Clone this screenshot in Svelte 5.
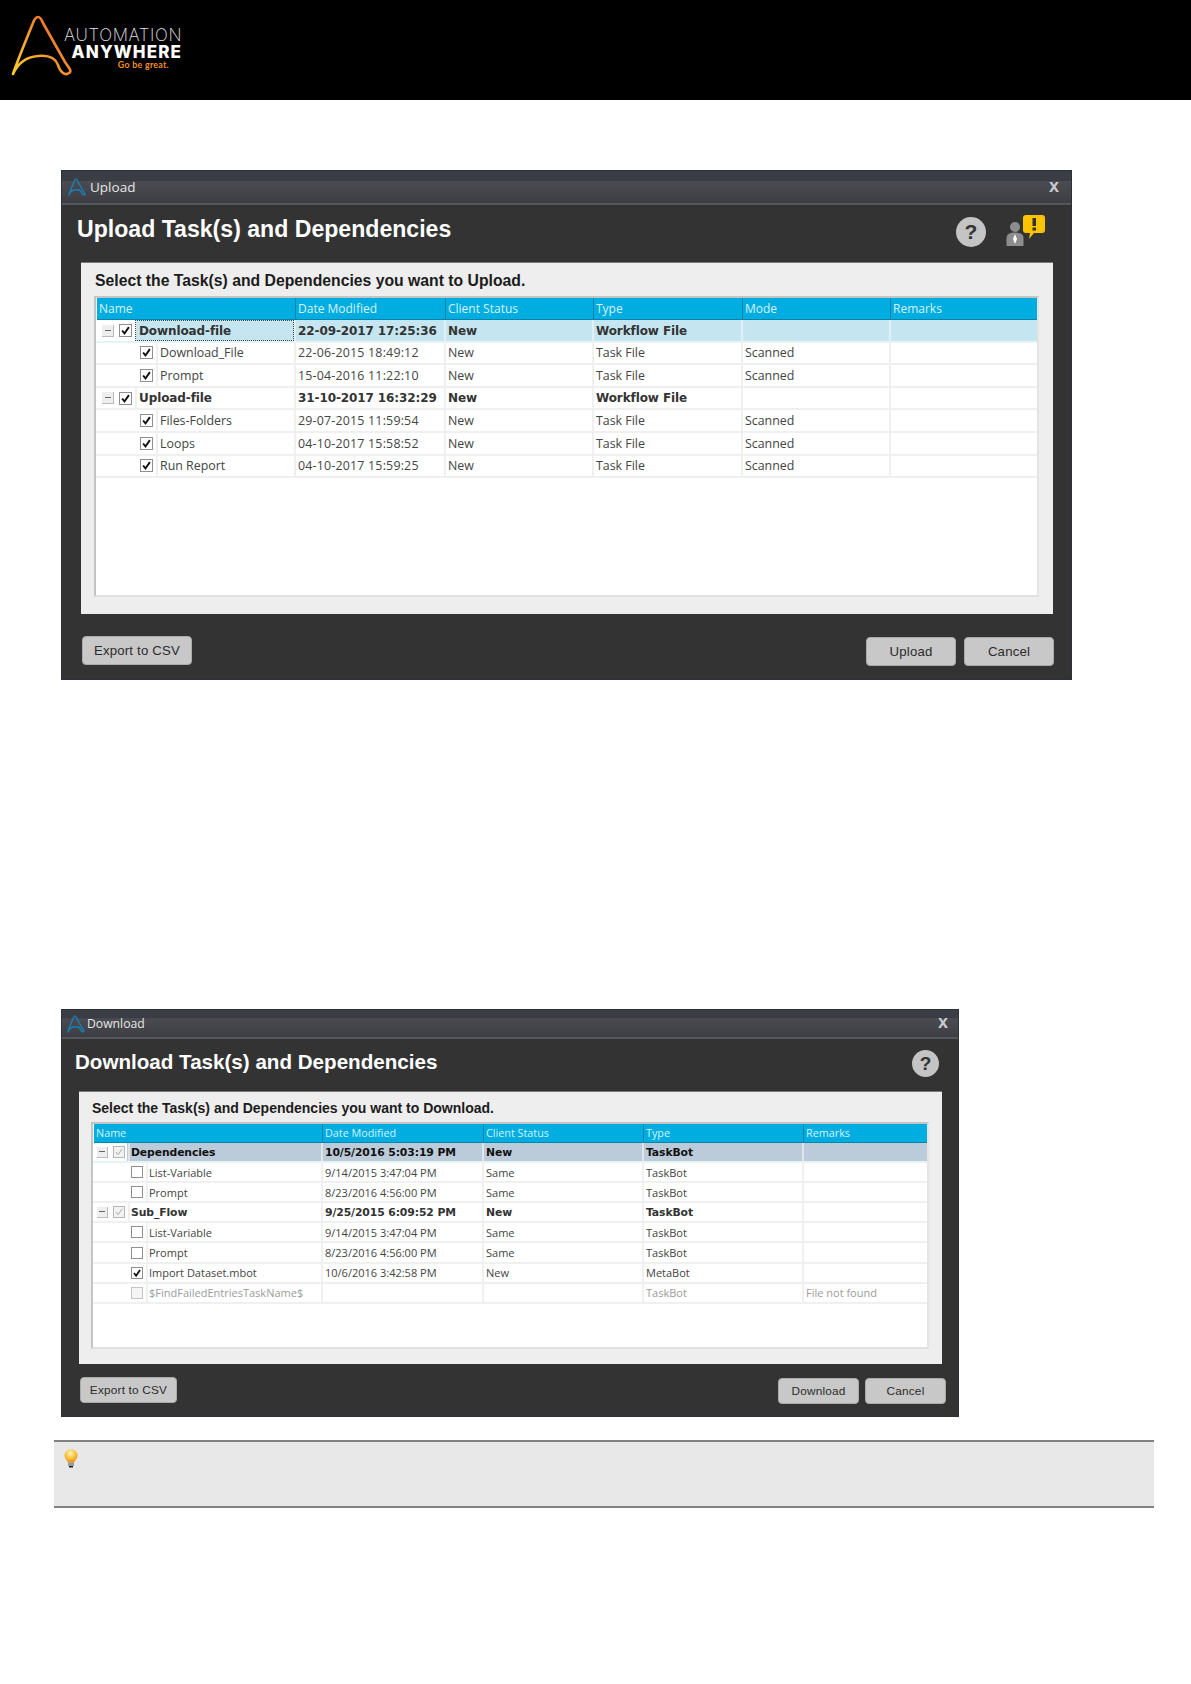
<script>
  const uploadRows = [
    { name: 'Download-file', date: '22-09-2017 17:25:36', status: 'New', type: 'Workflow File', mode: '', remarks: '', group: true, selected: true, checked: true },
    { name: 'Download_File', date: '22-06-2015 18:49:12', status: 'New', type: 'Task File', mode: 'Scanned', remarks: '', checked: true },
    { name: 'Prompt', date: '15-04-2016 11:22:10', status: 'New', type: 'Task File', mode: 'Scanned', remarks: '', checked: true },
    { name: 'Upload-file', date: '31-10-2017 16:32:29', status: 'New', type: 'Workflow File', mode: '', remarks: '', group: true, checked: true },
    { name: 'Files-Folders', date: '29-07-2015 11:59:54', status: 'New', type: 'Task File', mode: 'Scanned', remarks: '', checked: true },
    { name: 'Loops', date: '04-10-2017 15:58:52', status: 'New', type: 'Task File', mode: 'Scanned', remarks: '', checked: true },
    { name: 'Run Report', date: '04-10-2017 15:59:25', status: 'New', type: 'Task File', mode: 'Scanned', remarks: '', checked: true }
  ];

  const downloadRows = [
    { name: 'Dependencies', date: '10/5/2016 5:03:19 PM', status: 'New', type: 'TaskBot', remarks: '', group: true, selected: true, checked: true, muted: true },
    { name: 'List-Variable', date: '9/14/2015 3:47:04 PM', status: 'Same', type: 'TaskBot', remarks: '' },
    { name: 'Prompt', date: '8/23/2016 4:56:00 PM', status: 'Same', type: 'TaskBot', remarks: '' },
    { name: 'Sub_Flow', date: '9/25/2015 6:09:52 PM', status: 'New', type: 'TaskBot', remarks: '', group: true, checked: true, muted: true },
    { name: 'List-Variable', date: '9/14/2015 3:47:04 PM', status: 'Same', type: 'TaskBot', remarks: '' },
    { name: 'Prompt', date: '8/23/2016 4:56:00 PM', status: 'Same', type: 'TaskBot', remarks: '' },
    { name: 'Import Dataset.mbot', date: '10/6/2016 3:42:58 PM', status: 'New', type: 'MetaBot', remarks: '', checked: true },
    { name: '$FindFailedEntriesTaskName$', date: '', status: '', type: 'TaskBot', remarks: 'File not found', missing: true }
  ];

  const dialogs = [
    {
      kind: 'upload', win: 'Upload', title: 'Upload Task(s) and Dependencies',
      prompt: 'Select the Task(s) and Dependencies you want to Upload.', action: 'Upload',
      columns: ['Name', 'Date Modified', 'Client Status', 'Type', 'Mode', 'Remarks'],
      keys: ['date', 'status', 'type', 'mode', 'remarks'], rows: uploadRows, alert: true
    },
    {
      kind: 'download', win: 'Download', title: 'Download Task(s) and Dependencies',
      prompt: 'Select the Task(s) and Dependencies you want to Download.', action: 'Download',
      columns: ['Name', 'Date Modified', 'Client Status', 'Type', 'Remarks'],
      keys: ['date', 'status', 'type', 'remarks'], rows: downloadRows, alert: false
    }
  ];

  const logoPath = 'M13 74C17 62 26 40 33 23C36 15 40 15 43 23L65 62C70 69 72 71 69 73C65 76 60 72 58 65C55 57 47 55 38 56C26 57 18 63 13 74Z';
</script>

<header class="brand">
  <svg class="brand-mark" width="80" height="84" viewBox="0 0 80 84" fill="none">
    <defs>
      <linearGradient id="aGrad" x1="10" y1="74" x2="70" y2="30" gradientUnits="userSpaceOnUse">
        <stop offset="0" stop-color="#fdd22e" />
        <stop offset="0.55" stop-color="#f79a2b" />
        <stop offset="1" stop-color="#ee5d2f" />
      </linearGradient>
    </defs>
    <path d={logoPath} stroke="url(#aGrad)" stroke-width="2.6" stroke-linejoin="round" />
  </svg>
  <div class="brand-text">
    <span class="brand-top">AUTOMATION</span>
    <span class="brand-mid">ANYWHERE</span>
    <span class="brand-tag">Go be great.</span>
  </div>
</header>

<main class="page">
  {#each dialogs as d}
    <section class="dialog {d.kind}">
      <div class="titlebar">
        <svg class="win-icon" viewBox="10 14 64 64" fill="none">
          <path d={logoPath} stroke="#1b7fb5" stroke-width="5" stroke-linejoin="round" />
        </svg>
        <span class="win-title">{d.win}</span>
        <span class="win-close">x</span>
      </div>

      <div class="heading">
        <h1>{d.title}</h1>
        <div class="heading-icons">
          <span class="help">?</span>
          {#if d.alert}
            <svg class="alert" width="40" height="34" viewBox="0 0 40 34">
              <circle cx="10" cy="13" r="5" fill="#8d8d8d" />
              <path d="M1.500 32V24C1.500 20 5 18.500 10 18.500S18.500 20 18.500 24V32Z" fill="#8d8d8d" />
              <path d="M10 20L12 25L10 30L8 25Z" fill="#fff" />
              <path d="M21 1H37Q40 1 40 4V16Q40 19 37 19H29L24 25L25 19H21Q18 19 18 16V4Q18 1 21 1Z" fill="#fcc400" />
              <rect x="27.500" y="4" width="3.500" height="8" fill="#333" />
              <rect x="27.500" y="13.500" width="3.500" height="3" fill="#333" />
            </svg>
          {/if}
        </div>
      </div>

      <div class="panel">
        <p class="prompt">{d.prompt}</p>
        <div class="table">
          <div class="row head">
            {#each d.columns as c}
              <span class="cell">{c}</span>
            {/each}
          </div>
          {#each d.rows as r}
            <div class="row" class:group={r.group} class:selected={r.selected} class:missing={r.missing}>
              <div class="tree">
                {#if r.group}
                  <span class="expander"></span>
                {/if}
                <span class="check" class:muted={r.muted} class:off={r.missing}>
                  {#if r.checked}
                    <svg viewBox="0 0 13 13" fill="none">
                      <path d="M2.500 6.500L5.300 10L10.500 2.500" stroke={r.muted ? '#a9a9a9' : '#111'} stroke-width={r.muted ? 1.300 : 2.300} />
                    </svg>
                  {/if}
                </span>
                <span class="label" class:focus={r.selected && d.kind === 'upload'}>{r.name}</span>
              </div>
              {#each d.keys as k}
                <span class="cell">{r[k]}</span>
              {/each}
            </div>
          {/each}
        </div>
      </div>

      <div class="actions">
        <button class="export">Export to CSV</button>
        <div class="right">
          <button class="wide">{d.action}</button>
          <button class="wide">Cancel</button>
        </div>
      </div>
    </section>
  {/each}

  <aside class="note">
    <svg width="14" height="19" viewBox="0 0 14 19">
      <defs>
        <radialGradient id="bulb" cx="0.45" cy="0.3" r="0.7">
          <stop offset="0" stop-color="#fff6c0" />
          <stop offset="0.55" stop-color="#fdc43c" />
          <stop offset="1" stop-color="#ef8c12" />
        </radialGradient>
      </defs>
      <path d="M7 0.500C3 0.500 0.500 3 0.500 6.500C0.500 9.500 3 11 4 13.500H10C11 11 13.500 9.500 13.500 6.500C13.500 3 11 0.500 7 0.500Z" fill="url(#bulb)" />
      <rect x="4" y="13.500" width="6" height="3.500" fill="#9a9a9a" />
      <rect x="5" y="17" width="4" height="1.500" fill="#222" />
    </svg>
  </aside>
</main>

<style>
  :global(body) {
    margin: 0;
    background: #fff;
    font-family: "Liberation Sans", Arial, sans-serif;
  }

  .brand {
    height: 100px;
    background: #000;
    display: flex;
  }

  .brand-mark {
    display: block;
    flex-shrink: 0;
  }

  .brand-text {
    display: flex;
    flex-direction: column;
    align-items: flex-end;
    width: 118px;
    margin-left: -16px;
    padding-top: 27px;
    color: #fff;
    font-family: Inter, sans-serif;
    line-height: 1;
  }

  .brand-top {
    font-size: 17px;
    font-weight: 200;
    color: #e0e0e0;
    height: 17px;
    letter-spacing: 0.6px;
    white-space: nowrap;
  }

  .brand-mid {
    font-size: 17px;
    font-weight: 800;
    height: 17px;
    letter-spacing: 1.100px;
    white-space: nowrap;
  }

  .brand-tag {
    font-family: Lato, sans-serif;
    font-size: 8.800px;
    font-weight: 700;
    color: #f18f2a;
    margin-right: 13px;
    letter-spacing: 0.3px;
  }

  .page {
    padding-top: 70px;
  }

  .dialog {
    margin-left: 61px;
    background: #333;
    border: 1px solid #2c3138;
    box-sizing: border-box;
    display: flex;
    flex-direction: column;
  }

  .dialog.upload {
    width: 1011px;
    height: 510px;
  }

  .dialog.download {
    width: 898px;
    height: 408px;
    margin-top: 329px;
  }

  .titlebar {
    display: flex;
    align-items: center;
    border-bottom: 2px solid #53565b;
    background: linear-gradient(#3a3d44 0 30%, #4a4c52 32%, #3c3e43);
    color: #e6e6e6;
    font-family: "Open Sans", sans-serif;
  }

  .upload .titlebar {
    height: 32px;
    gap: 4px;
    padding: 0 12px 0 6px;
    font-size: 13.500px;
  }

  .download .titlebar {
    height: 27px;
    gap: 2px;
    padding: 0 10px 0 5px;
    font-size: 12.200px;
  }

  .win-icon {
    width: 18px;
    height: 18px;
  }

  .win-title {
    flex: 1;
    margin-top: -1px;
  }

  .win-close {
    color: #c8ccd0;
    font-family: "Liberation Sans", sans-serif;
    font-weight: 700;
    font-size: 18px;
    line-height: 1;
    margin-top: -3px;
  }

  .heading {
    display: flex;
    align-items: center;
    justify-content: space-between;
  }

  .upload .heading {
    height: 57px;
    padding: 0 26px 0 15px;
  }

  .download .heading {
    height: 52px;
    padding: 0 19px 0 13px;
  }

  h1 {
    margin: 0;
    color: #fff;
    font-weight: 700;
  }

  .upload h1 {
    font-size: 23.100px;
    margin-top: -8px;
  }

  .download h1 {
    font-size: 20.600px;
    margin-top: -6px;
  }

  .heading-icons {
    display: flex;
    align-items: center;
    gap: 19px;
    margin-bottom: 7px;
  }

  .help {
    display: flex;
    align-items: center;
    justify-content: center;
    border-radius: 50%;
    background: #c4c4c4;
    color: #333;
    font-weight: 700;
  }

  .upload .help {
    width: 30px;
    height: 30px;
    font-size: 21px;
    margin-top: 4px;
  }

  .download .help {
    width: 27px;
    height: 27px;
    font-size: 19px;
    margin-top: 4px;
  }

  .alert {
    margin-top: 2px;
  }

  .panel {
    background: #eee;
    border-top: 1px solid #777;
    box-sizing: border-box;
    display: flex;
    flex-direction: column;
  }

  .upload .panel {
    height: 352px;
    margin: 0 18px 0 19px;
    padding: 8px 14px 17px 13px;
  }

  .download .panel {
    height: 273px;
    margin: 0 16px 0 17px;
    padding: 8px 13px 15px 12px;
  }

  .prompt {
    margin: 0;
    font-weight: 700;
    color: #1c1c1c;
  }

  .upload .prompt {
    font-size: 15.750px;
    line-height: 20px;
    margin-left: 1px;
    margin-bottom: 5px;
  }

  .download .prompt {
    font-size: 14px;
    line-height: 17px;
    margin-left: 1px;
    margin-bottom: 5px;
  }

  .table {
    flex: 1;
    background: #fff;
    border: 2px solid #c4c4c4;
    border-right-color: #e4e4e4;
    border-bottom-color: #e0e0e0;
    box-sizing: border-box;
    font-family: "Open Sans", sans-serif;
    color: #444;
  }

  .row {
    display: grid;
    border-bottom: 2px solid #f0f0f0;
    box-sizing: border-box;
  }

  .upload .row {
    grid-template-columns: 198px 150px 148px 149px 148px 148px;
    height: 22.600px;
    font-size: 12.400px;
  }

  .download .row {
    grid-template-columns: 228px 161px 160px 160px 124px;
    height: 20.100px;
    font-size: 11px;
  }

  .upload .row:not(.group):not(.head) .cell:nth-child(2) {
    letter-spacing: 0.2px;
  }

  .row.head {
    background: #00ade0;
    color: #d6f3fb;
    border-bottom: 1px solid #0a83a8;
    margin: 0 0 0 1px;
  }

  .upload .row.head {
    height: 22px;
    font-size: 12px;
  }

  .download .row.head {
    height: 19px;
    font-size: 10.800px;
  }

  .download .row.head .cell {
    padding-bottom: 2px;
  }

  .row.head .cell {
    border-left: 1px solid #0a83a8;
  }

  .row.head .cell:first-child {
    border-left: none;
  }

  .cell,
  .label {
    display: flex;
    align-items: center;
    white-space: nowrap;
    overflow: hidden;
    padding-left: 2px;
    min-width: 0;
  }

  .cell {
    border-left: 2px solid #f0f0f0;
  }

  .tree {
    display: flex;
    align-items: center;
    min-width: 0;
    padding-left: 44px;
  }

  .download .tree {
    padding-left: 38px;
  }

  .row.group .tree {
    padding-left: 6px;
  }

  .download .row.group .tree {
    padding-left: 4px;
  }

  .expander {
    width: 12px;
    height: 12px;
    background: linear-gradient(#666, #666) center / 6px 1px no-repeat, #eee;
    border-right: 1px solid #bbb;
    border-bottom: 1px solid #bbb;
    box-sizing: border-box;
    margin-right: 5px;
  }

  .download .expander {
    width: 11px;
    height: 11px;
  }

  .check {
    width: 11px;
    height: 11px;
    border: 1px solid #8f8f8f;
    background: #fff;
    flex-shrink: 0;
    box-sizing: content-box;
    display: block;
  }

  .check svg {
    display: block;
  }

  .check.muted {
    border-color: #b5b5b5;
    background: #f2f2f2;
  }

  .check.off {
    border-color: #c4c4c4;
    background: #f5f5f5;
  }

  .download .check {
    width: 10px;
    height: 10px;
  }

  .label {
    flex: 1;
    height: 100%;
    margin-left: 3px;
    border-left: 2px solid #f0f0f0;
    box-sizing: border-box;
  }

  .download .label {
    padding-left: 1px;
  }

  .row.group .cell,
  .row.group .label {
    font-family: "DejaVu Sans", sans-serif;
    font-weight: 700;
    color: #333;
    letter-spacing: -0.1px;
  }

  .upload .row.group {
    font-size: 12px;
  }

  .download .row.group {
    font-size: 10.800px;
  }

  .row.selected {
    background: #c5e6f0;
    border-bottom-color: #e8f3f7;
  }

  .download .row.selected {
    background: linear-gradient(#fff, #fff) left / 34px 100% no-repeat, #bccbd9;
  }

  .download .row.selected .cell,
  .download .row.selected .label {
    color: #111;
    border-left-color: #dfe5ea;
  }

  .upload .row.selected .tree {
    background: linear-gradient(#fff, #fff) left / 40px 100% no-repeat;
  }

  .upload .row.selected .cell {
    border-left-color: #e0eff4;
  }

  .label.focus {
    border: 1px dotted #444;
    height: 21px;
    padding-left: 3px;
  }

  .row.missing .cell,
  .row.missing .label {
    color: #9c9c9c;
  }

  .actions {
    display: flex;
    justify-content: space-between;
    align-items: flex-start;
    flex: 1;
  }

  .upload .actions {
    padding: 22px 17px 0 20px;
  }

  .download .actions {
    padding: 13px 12px 0 18px;
  }

  .right {
    display: flex;
  }

  .upload .right {
    gap: 8px;
    padding-top: 1px;
  }

  .download .right {
    gap: 6px;
    padding-top: 1px;
  }

  button {
    appearance: none;
    background: #c8c8c8;
    border: 1px solid #aaa;
    border-radius: 4px;
    color: #2b2b2b;
    font-family: "Liberation Sans", sans-serif;
    padding: 0;
    letter-spacing: 0.2px;
  }

  .upload button {
    height: 29px;
    font-size: 13.200px;
  }

  .download button {
    height: 26px;
    font-size: 11.800px;
  }

  .upload .export {
    width: 110px;
  }

  .download .export {
    width: 97px;
  }

  .upload .wide {
    width: 90px;
  }

  .download .wide {
    width: 81px;
  }

  .note {
    margin: 23px 37px 0 54px;
    height: 68px;
    background: #e8e8e8;
    border-top: 2px solid #808080;
    border-bottom: 2px solid #808080;
    box-sizing: border-box;
    padding: 7px 10px;
  }

  .note svg {
    display: block;
  }
</style>
